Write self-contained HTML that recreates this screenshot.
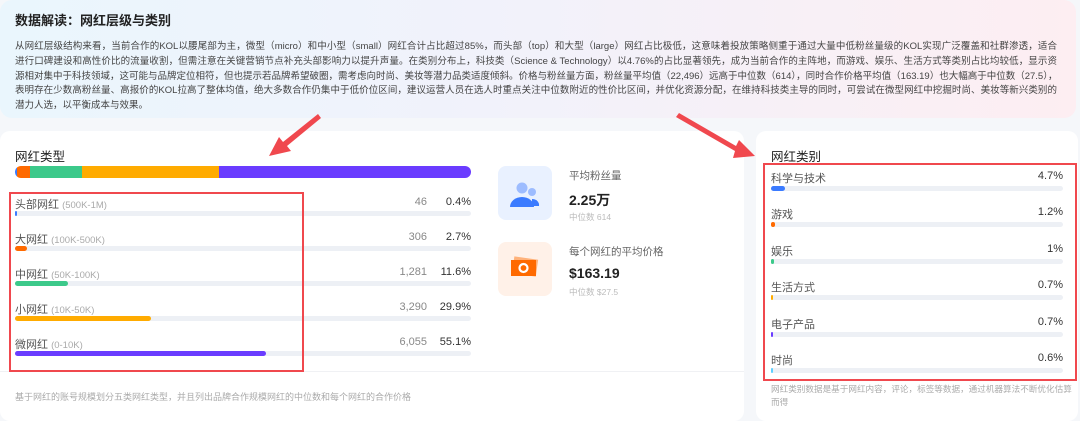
<!DOCTYPE html>
<html><head><meta charset="utf-8"><style>
*{margin:0;padding:0;box-sizing:border-box}
body{width:1080px;height:410px;overflow:hidden;background:#f5f7fa;font-family:"Liberation Sans","Noto Sans CJK SC",sans-serif;position:relative;color:#333}
.abs{position:absolute;white-space:nowrap}
.top{position:absolute;left:0;top:0;width:1076px;height:118px;border-radius:12px;background:linear-gradient(90deg,#eaf6fd 0%,#f1f2fb 45%,#fdeef2 100%)}
.p{position:absolute;left:15px;font-size:9.5px;color:#444;white-space:nowrap;overflow:hidden}
.j{width:1042px;text-align:justify;text-align-last:justify}
.card{position:absolute;background:#fff;border-radius:10px}
.lbl{font-size:11px;color:#555}
.lbl span{color:#aaa;font-size:9.5px}
.track{position:absolute;height:5px;border-radius:3px;background:#edf0f5}
.fill{position:absolute;left:0;top:0;height:5px;border-radius:3px}
.num{font-size:11px;color:#888;text-align:right;width:60px}
.pct{font-size:11px;color:#333;text-align:right;width:60px}
</style></head><body>
<div class="top"></div>
<div class="abs" style="left:15px;top:10px;font-size:13px;font-weight:bold;color:#222">数据解读：网红层级与类别</div>
<div class="p j" style="top:38px">从网红层级结构来看，当前合作的KOL以腰尾部为主，微型（micro）和中小型（small）网红合计占比超过85%，而头部（top）和大型（large）网红占比极低，这意味着投放策略侧重于通过大量中低粉丝量级的KOL实现广泛覆盖和社群渗透，适合</div>
<div class="p j" style="top:53px">进行口碑建设和高性价比的流量收割，但需注意在关键营销节点补充头部影响力以提升声量。在类别分布上，科技类（Science &amp; Technology）以4.76%的占比显著领先，成为当前合作的主阵地，而游戏、娱乐、生活方式等类别占比均较低，显示资</div>
<div class="p j" style="top:68px">源相对集中于科技领域，这可能与品牌定位相符，但也提示若品牌希望破圈，需考虑向时尚、美妆等潜力品类适度倾斜。价格与粉丝量方面，粉丝量平均值（22,496）远高于中位数（614），同时合作价格平均值（163.19）也大幅高于中位数（27.5），</div>
<div class="p j" style="top:82px">表明存在少数高粉丝量、高报价的KOL拉高了整体均值，绝大多数合作仍集中于低价位区间，建议运营人员在选人时重点关注中位数附近的性价比区间，并优化资源分配，在维持科技类主导的同时，可尝试在微型网红中挖掘时尚、美妆等新兴类别的</div>
<div class="p" style="top:97px">潜力人选，以平衡成本与效果。</div>

<div class="card" style="left:0;top:131px;width:744px;height:290px"></div>
<div class="abs" style="left:0;top:371px;width:744px;height:1px;background:#f0f1f4"></div>
<div class="abs" style="left:15px;top:146px;font-size:12.5px;color:#222">网红类型</div>
<div class="abs" style="left:15px;top:166px;width:456px;height:12px;border-radius:6px;overflow:hidden;display:flex">
<div style="width:2px;background:#3b7bff"></div><div style="width:13px;background:#ff6a00"></div><div style="width:52px;background:#3cc98a"></div><div style="width:137px;background:#ffab00"></div><div style="flex:1;background:#6a3cff"></div></div>

<div class="abs lbl" style="left:15px;top:196px">头部网红 <span>(500K-1M)</span></div>
<div class="abs num" style="left:367px;top:196px">46</div><div class="abs pct" style="left:411px;top:196px">0.4%</div>
<div class="track" style="left:15px;top:211px;width:456px"><div class="fill" style="width:2px;background:#3b7bff"></div></div>
<div class="abs lbl" style="left:15px;top:231px">大网红 <span>(100K-500K)</span></div>
<div class="abs num" style="left:367px;top:231px">306</div><div class="abs pct" style="left:411px;top:231px">2.7%</div>
<div class="track" style="left:15px;top:246px;width:456px"><div class="fill" style="width:12px;background:#ff6a00"></div></div>
<div class="abs lbl" style="left:15px;top:266px">中网红 <span>(50K-100K)</span></div>
<div class="abs num" style="left:367px;top:266px">1,281</div><div class="abs pct" style="left:411px;top:266px">11.6%</div>
<div class="track" style="left:15px;top:281px;width:456px"><div class="fill" style="width:53px;background:#3cc98a"></div></div>
<div class="abs lbl" style="left:15px;top:301px">小网红 <span>(10K-50K)</span></div>
<div class="abs num" style="left:367px;top:301px">3,290</div><div class="abs pct" style="left:411px;top:301px">29.9%</div>
<div class="track" style="left:15px;top:316px;width:456px"><div class="fill" style="width:136px;background:#ffab00"></div></div>
<div class="abs lbl" style="left:15px;top:336px">微网红 <span>(0-10K)</span></div>
<div class="abs num" style="left:367px;top:336px">6,055</div><div class="abs pct" style="left:411px;top:336px">55.1%</div>
<div class="track" style="left:15px;top:351px;width:456px"><div class="fill" style="width:251px;background:#6a3cff"></div></div>
<div class="abs" style="left:15px;top:390px;font-size:9px;color:#aaa">基于网红的账号规模划分五类网红类型，并且列出品牌合作规模网红的中位数和每个网红的合作价格</div>

<div class="abs" style="left:498px;top:166px;width:54px;height:54px;border-radius:8px;background:#e9f1ff"></div>
<svg class="abs" style="left:498px;top:166px" width="54" height="54"><circle cx="24" cy="22" r="5.5" fill="#9dbcff"/><circle cx="34" cy="26" r="4" fill="#9dbcff"/><path d="M34 33 a7 6 0 0 1 7 7 h-7z" fill="#3b7bff"/><path d="M12 41 a12 10 0 0 1 24 0z" fill="#3b7bff"/></svg>
<div class="abs" style="left:569px;top:168px;font-size:10.5px;color:#666">平均粉丝量</div>
<div class="abs" style="left:569px;top:190px;font-size:14px;font-weight:bold;color:#222">2.25万</div>
<div class="abs" style="left:569px;top:211px;font-size:8.5px;color:#bbb">中位数 614</div>
<div class="abs" style="left:498px;top:242px;width:54px;height:54px;border-radius:8px;background:#fff1e8"></div>
<svg class="abs" style="left:498px;top:242px" width="54" height="54"><rect x="15" y="16" width="24" height="17" fill="#ffb27a" transform="rotate(8 27 25)"/><rect x="13" y="18" width="25" height="16" fill="#ff6a00"/><circle cx="25.5" cy="26" r="4" fill="none" stroke="#fff" stroke-width="2.2"/></svg>
<div class="abs" style="left:569px;top:244px;font-size:10.5px;color:#666">每个网红的平均价格</div>
<div class="abs" style="left:569px;top:265px;font-size:14px;font-weight:bold;color:#222">$163.19</div>
<div class="abs" style="left:569px;top:286px;font-size:8.5px;color:#bbb">中位数 $27.5</div>

<div class="card" style="left:756px;top:131px;width:322px;height:290px"></div>
<div class="abs" style="left:771px;top:146px;font-size:12.5px;color:#222">网红类别</div>
<div class="abs lbl" style="left:771px;top:170px">科学与技术</div><div class="abs pct" style="left:1003px;top:170px">4.7%</div>
<div class="track" style="left:771px;top:186px;width:292px"><div class="fill" style="width:14px;background:#3b7bff"></div></div>
<div class="abs lbl" style="left:771px;top:206px">游戏</div><div class="abs pct" style="left:1003px;top:206px">1.2%</div>
<div class="track" style="left:771px;top:222px;width:292px"><div class="fill" style="width:4px;background:#ff6a00"></div></div>
<div class="abs lbl" style="left:771px;top:243px">娱乐</div><div class="abs pct" style="left:1003px;top:243px">1%</div>
<div class="track" style="left:771px;top:259px;width:292px"><div class="fill" style="width:3px;background:#3cc98a"></div></div>
<div class="abs lbl" style="left:771px;top:279px">生活方式</div><div class="abs pct" style="left:1003px;top:279px">0.7%</div>
<div class="track" style="left:771px;top:295px;width:292px"><div class="fill" style="width:2px;background:#ffab00"></div></div>
<div class="abs lbl" style="left:771px;top:316px">电子产品</div><div class="abs pct" style="left:1003px;top:316px">0.7%</div>
<div class="track" style="left:771px;top:332px;width:292px"><div class="fill" style="width:2px;background:#6a3cff"></div></div>
<div class="abs lbl" style="left:771px;top:352px">时尚</div><div class="abs pct" style="left:1003px;top:352px">0.6%</div>
<div class="track" style="left:771px;top:368px;width:292px"><div class="fill" style="width:2px;background:#5ecfff"></div></div>
<div class="abs" style="left:771px;top:383px;font-size:8.6px;color:#aaa">网红类别数据是基于网红内容，评论，标签等数据，通过机器算法不断优化估算</div>
<div class="abs" style="left:771px;top:396px;font-size:8.6px;color:#aaa">而得</div>

<div class="abs" style="left:9px;top:192px;width:295px;height:180px;border:2.5px solid #f0484e"></div>
<div class="abs" style="left:763px;top:163px;width:314px;height:218px;border:2.5px solid #f0484e"></div>
<svg class="abs" style="left:0;top:0" width="1080" height="410">
<g fill="#f0484e"><path d="M318 114 L321 118 L287 146 L291 151 L269 156 L279 137 L283 142 Z"/>
<path d="M676 117 L679 113 L736 146 L739 140 L755 156 L733 158 L735 151 Z"/></g>
</svg>
</body></html>
